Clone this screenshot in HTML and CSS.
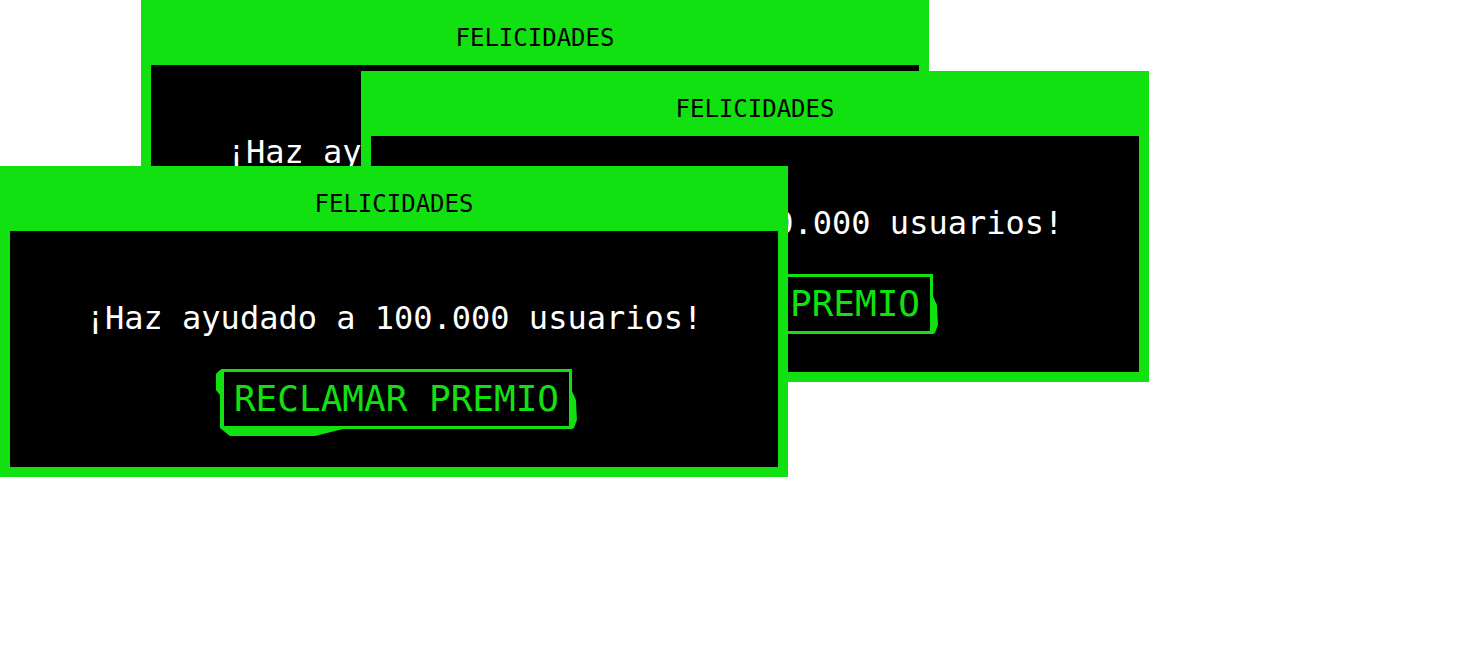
FILE: index.html
```html
<!DOCTYPE html>
<html lang="es">
<head>
<meta charset="utf-8">
<title>Felicidades</title>
<link rel="stylesheet" href="styles.css">
</head>
<body>
<div class="desktop">
  <section class="window win-1">
    <header class="win-title">FELICIDADES</header>
    <div class="win-body">
      <p class="message">¡Haz ayudado a 100.000 usuarios!</p>
      <button class="claim" type="button">RECLAMAR PREMIO</button>
    </div>
  </section>
  <section class="window win-2">
    <header class="win-title">FELICIDADES</header>
    <div class="win-body">
      <p class="message">¡Haz ayudado a 100.000 usuarios!</p>
      <button class="claim" type="button">RECLAMAR PREMIO</button>
    </div>
  </section>
  <section class="window win-3">
    <header class="win-title">FELICIDADES</header>
    <div class="win-body">
      <p class="message">¡Haz ayudado a 100.000 usuarios!</p>
      <button class="claim" type="button">RECLAMAR PREMIO</button>
    </div>
  </section>
</div>
</body>
</html>
```

FILE: styles.css
```css
html, body {
  margin: 0;
  padding: 0;
  background: #ffffff;
}

body {
  font-family: "DejaVu Sans Mono", "Liberation Mono", monospace;
}

.desktop {
  position: relative;
  width: 1474px;
  height: 667px;
  overflow: hidden;
}

.window {
  position: absolute;
  width: 788px;
  height: 311px;
  box-sizing: border-box;
  padding: 0 10px 10px;
  background: #11e011;
  display: flex;
  flex-direction: column;
}

.win-1 { left: 141px; top: 0; z-index: 1; }
.win-2 { left: 361px; top: 71px; z-index: 2; }
.win-3 { left: 0; top: 166px; z-index: 3; }

.win-title {
  height: 65px;
  box-sizing: border-box;
  padding-top: 12px;
  line-height: 53px;
  font-size: 24px;
  color: #000000;
  text-align: center;
}

.win-body {
  flex: 1;
  background: #000000;
  display: flex;
  flex-direction: column;
  align-items: center;
  padding-top: 67px;
  box-sizing: border-box;
  isolation: isolate;
  position: relative;
}

.message {
  margin: 0;
  font-size: 32px;
  line-height: 40px;
  color: #ffffff;
  text-align: center;
}

.claim {
  position: relative;
  margin: 31px 0 0 5px;
  padding: 0 10px;
  height: 60px;
  box-sizing: border-box;
  border: 3px solid #11e011;
  background: #000000;
  color: #11e011;
  font-family: inherit;
  font-size: 36px;
  line-height: 54px;
  cursor: pointer;
}

.claim::before {
  content: "";
  position: absolute;
  left: -11px;
  top: -5px;
  width: calc(100% + 22px);
  height: calc(100% + 16px);
  background: #11e011;
  z-index: -1;
  clip-path: polygon(7px 3px, 359px 3px, 359px 24px, 363px 33px, 364px 53px, 361px 61px, 359px 62px, 130px 62px, 102px 69px, 17px 69px, 7px 61px, 7px 28px, 3px 23px, 3px 7px);
}
```
